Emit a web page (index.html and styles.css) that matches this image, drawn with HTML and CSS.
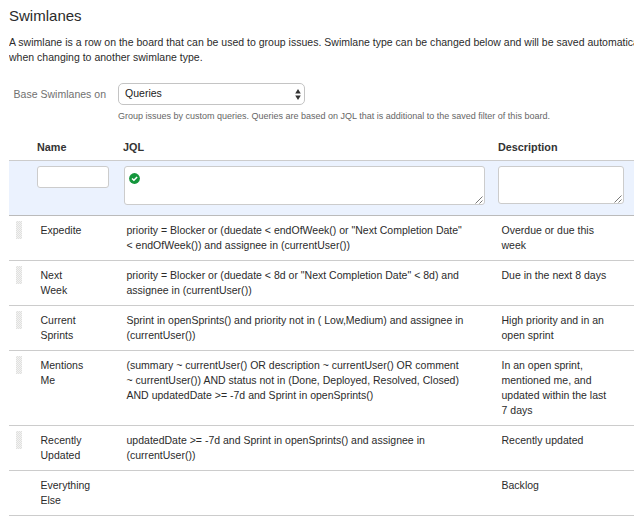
FILE: index.html
```html
<!DOCTYPE html>
<html lang="en">
<head>
<meta charset="utf-8">
<title>Swimlanes</title>
<link rel="stylesheet" href="styles.css">
</head>
<body>
<main class="panel">
  <h1 class="title">Swimlanes</h1>
  <p class="intro">A swimlane is a row on the board that can be used to group issues. Swimlane type can be changed below and will be saved automatically<br>when changing to another swimlane type.</p>

  <div class="field">
    <span class="field-label">Base Swimlanes on</span>
    <div class="field-body">
      <div class="select">
        <span>Queries</span>
        <svg class="arrows" width="6" height="11" viewBox="0 0 6 11"><path d="M3 0L5.8 4.4H.2zM3 11L.2 6.6H5.8z"/></svg>
      </div>
      <p class="hint">Group issues by custom queries. Queries are based on JQL that is additional to the saved filter of this board.</p>
    </div>
  </div>

  <div class="table">
    <div class="row head"><span></span><span>Name</span><span>JQL</span><span>Description</span></div>
    <div class="row create">
      <span></span>
      <div class="input name-input"></div>
      <div class="input jql-input">
        <svg class="check" width="11" height="11" viewBox="0 0 11 11"><circle cx="5.5" cy="5.5" r="5.4"/><path d="M3 5.5L4.9 7.3L8.1 3.9"/></svg>
        <svg class="grip" width="8" height="8" viewBox="0 0 8 8"><path d="M.5 7.5L7.5.5M4.5 7.5L7.5 4.5"/></svg>
      </div>
      <div class="input desc-input">
        <svg class="grip" width="8" height="8" viewBox="0 0 8 8"><path d="M.5 7.5L7.5.5M4.5 7.5L7.5 4.5"/></svg>
      </div>
    </div>
    <div class="row item"><i class="drag"></i><span>Expedite</span><span>priority = Blocker or (duedate &lt; endOfWeek() or "Next Completion Date"<br>&lt; endOfWeek()) and assignee in (currentUser())</span><span>Overdue or due this<br>week</span></div>
    <div class="row item"><i class="drag"></i><span>Next<br>Week</span><span>priority = Blocker or (duedate &lt; 8d or "Next Completion Date" &lt; 8d) and<br>assignee in (currentUser())</span><span>Due in the next 8 days</span></div>
    <div class="row item"><i class="drag"></i><span>Current<br>Sprints</span><span>Sprint in openSprints() and priority not in ( Low,Medium) and assignee in<br>(currentUser())</span><span>High priority and in an<br>open sprint</span></div>
    <div class="row item"><i class="drag"></i><span>Mentions<br>Me</span><span>(summary ~ currentUser() OR description ~ currentUser() OR comment<br>~ currentUser()) AND status not in (Done, Deployed, Resolved, Closed)<br>AND updatedDate &gt;= -7d and Sprint in openSprints()</span><span>In an open sprint,<br>mentioned me, and<br>updated within the last<br>7 days</span></div>
    <div class="row item"><i class="drag"></i><span>Recently<br>Updated</span><span>updatedDate &gt;= -7d and Sprint in openSprints() and assignee in<br>(currentUser())</span><span>Recently updated</span></div>
    <div class="row item"><span></span><span>Everything<br>Else</span><span></span><span>Backlog</span></div>
  </div>
</main>
</body>
</html>
```
FILE: styles.css
```css
* { box-sizing: border-box; }
body {
  margin: 0;
  background: #fff;
  color: #2b2b2b;
  font: 10.5px/15px "Liberation Sans", Arial, sans-serif;
  letter-spacing: 0.01px;
  white-space: nowrap;
}
.panel { padding: 7px 0 0 9px; overflow: hidden; }
.title { margin: 0; font-size: 15px; line-height: 18px; font-weight: 400; }
.intro { margin: 10px 0 0; overflow: hidden; }
.field { display: flex; margin-top: 18px; }
.field-label { width: 97px; margin-right: 12px; padding-top: 4px; text-align: right; color: #707070; }
.select {
  display: flex;
  align-items: center;
  justify-content: space-between;
  width: 187px;
  height: 22px;
  padding: 0 3px 2px 6px;
  border: 1px solid #c4c4c4;
  border-radius: 5px;
  color: #222;
}
.arrows { fill: #333; position: relative; top: 1px; }
.hint { margin: 4px 0 0; color: #666; font-size: 9px; letter-spacing: 0; }
.table { margin-top: 11px; }
.row { display: grid; border-bottom: 1px solid #ccc; }
.head { grid-template-columns: 28px 86px 375px 1fr; height: 26px; padding-top: 5px; font-size: 10.8px; font-weight: 700; color: #333; }
.create { grid-template-columns: 28px 87px 374px 1fr; height: 55px; padding-top: 5px; background: #ebf2fe; border-color: #bbb; }
.item { grid-template-columns: 31.5px 86px 375px 1fr; padding: 7px 0; }
.input { position: relative; background: #fff; border: 1px solid #ccc; border-radius: 3px; }
.name-input { width: 72px; height: 22px; }
.jql-input { width: 361px; height: 39px; }
.desc-input { width: 126px; height: 38px; }
.check { position: absolute; left: 4px; top: 6px; }
.check circle { fill: #14963c; }
.check path { fill: none; stroke: #fff; stroke-width: 1.5; }
.grip { position: absolute; right: 1px; bottom: 0; fill: none; stroke: #555; stroke-width: .8; }
.drag {
  width: 6px;
  height: 18px;
  margin: -2px 0 0 7px;
  background: repeating-conic-gradient(#e0e0de 0 25%, #f3f3f3 0 50%) 0 0 / 2px 2px;
}
```
